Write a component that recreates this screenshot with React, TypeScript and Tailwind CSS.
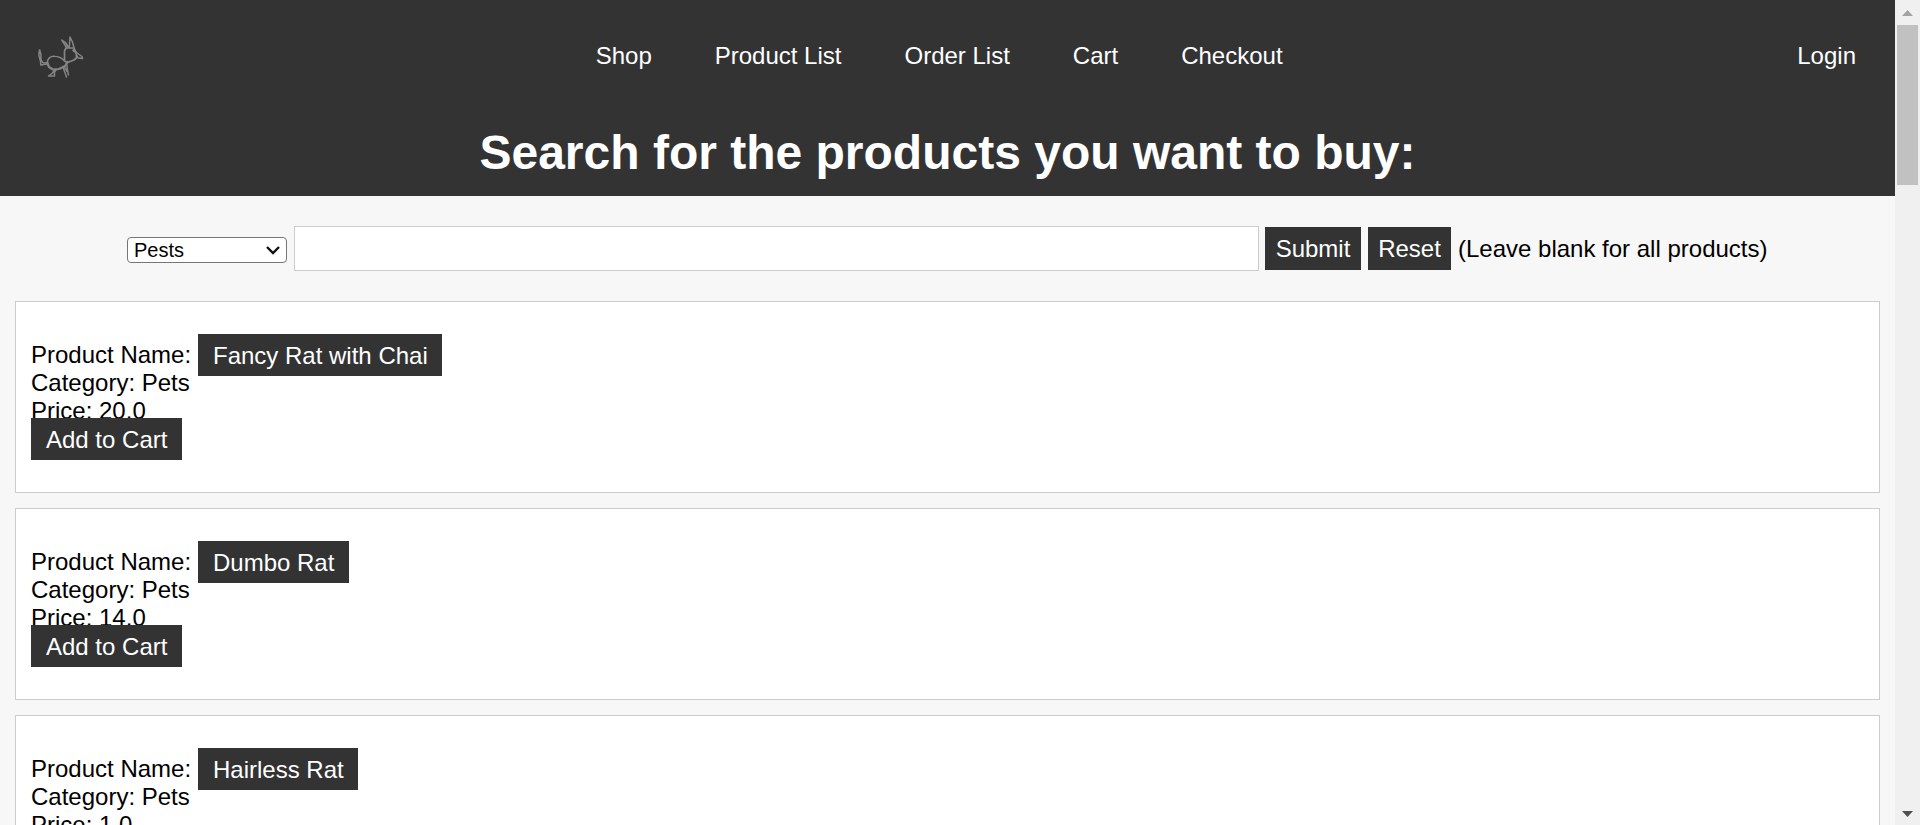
import React from "react";

const links = ["Shop", "Product List", "Order List", "Cart", "Checkout"];

const products = [
  { name: "Fancy Rat with Chai", category: "Pets", price: "20.0" },
  { name: "Dumbo Rat", category: "Pets", price: "14.0" },
  { name: "Hairless Rat", category: "Pets", price: "1.0" },
];

function Logo() {
  return (
    <svg className="ml-[37px] h-[44px] w-[48px] shrink-0" viewBox="37 35 48 44" fill="none" stroke="#858585" strokeWidth="1.5" strokeLinejoin="round" strokeLinecap="round">
      <path d="M39.5 50 38.8 55 40.5 61 40.8 65 46.5 64M39.7 50 41 55 40.8 59 42.6 62.5 47 63" />
      <path d="M47.5 65C46.5 58 51 56 55 56.3 59 56.5 61.5 58 64 60.5" />
      <path d="M47.5 63 49 67 53 69.5 59 69 65 66 67.5 62" strokeWidth="2.2" />
      <path d="M64.5 61V51L66 48H74L76 53 77 57M64.5 61 67.5 62.5 74 60 77.5 57" strokeWidth="1.7" />
      <path d="M66.5 47.5 61.8 40 65.5 42.5 68.3 47M69.3 47.5 70 37 72.5 42 74.3 49" />
      <path d="M74 49.5 77 53 82 56.5 82.5 58.5 78.5 58 76 56" strokeWidth="1.5" />
      <path d="M73.5 50.5 75 51.5" strokeWidth="2.4" />
      <path d="M54.5 70 52.5 73 48.5 76H54.5V72L56 70M63 67 66.5 77M64.5 67 67 71.5M67 65 67.2 69 68.5 75" />
    </svg>
  );
}

function ProductCard({ product }: { product: (typeof products)[number] }) {
  return (
    <article className="mx-[15px] mb-[15px] h-[192px] shrink-0 border border-[#ccc] bg-white px-[15px] pt-[39px] leading-[28px]">
      <div className="flex h-[28px]">
        <span className="w-[167px] shrink-0">Product Name:</span>
        <a className="-mt-[7px] h-[42px] bg-[#333] pl-[15px] pr-[14.3px] pt-[8px] text-white">{product.name}</a>
      </div>
      <div>Category: {product.category}</div>
      <div>Price: {product.price}</div>
      <a className="relative -mt-[7px] block h-[42px] w-[151px] bg-[#333] pl-[15px] pt-[8px] text-white">Add to Cart</a>
    </article>
  );
}

export default function App() {
  return (
    <div className="flex h-[825px] w-full overflow-hidden bg-[#f7f7f7] font-['Liberation_Sans',Arial,sans-serif] text-[24px] text-black">
      <main className="flex min-w-0 flex-1 flex-col overflow-hidden">
        <header className="h-[196px] shrink-0 bg-[#333] text-white">
          <div className="flex h-[113px] items-center justify-between">
            <Logo />
            <nav className="flex gap-[63px] whitespace-nowrap pb-[2px] pr-[4px]">
              {links.map((link) => (
                <a key={link}>{link}</a>
              ))}
            </nav>
            <a className="mr-[39px] pb-[2px]">Login</a>
          </div>
          <h1 className="mt-[11px] text-center text-[48px] font-bold leading-[58px]">Search for the products you want to buy:</h1>
        </header>
        <form className="flex h-[105px] shrink-0 items-start pl-[127px] pt-[30px] leading-[43px]">
          <div className="mt-[11px] flex h-[26px] w-[160px] shrink-0 items-center justify-between rounded-[4px] border border-[#767676] bg-white pl-[6px] pr-[6px] text-[20px] leading-[24px]">
            <span>Pests</span>
            <svg width="14" height="10" viewBox="0 0 14 10" fill="none" stroke="#111" strokeWidth="2.4">
              <path d="m1 2 6 6 6-6" />
            </svg>
          </div>
          <input className="ml-[7px] block h-[45px] w-[965px] shrink-0 border border-[#ccc] bg-white px-2 outline-none" />
          <button type="button" className="ml-[6px] mt-px h-[43px] w-[96px] shrink-0 bg-[#333] text-center text-white">Submit</button>
          <button type="button" className="ml-[7px] mt-px h-[43px] w-[83px] shrink-0 bg-[#333] text-center text-white">Reset</button>
          <span className="ml-[7px] mt-px whitespace-nowrap">(Leave blank for all products)</span>
        </form>
        {products.map((product) => (
          <ProductCard key={product.name} product={product} />
        ))}
      </main>
      <aside className="flex w-[25px] shrink-0 flex-col items-center bg-[#f0f0f0]">
        <svg width="25" height="25" viewBox="0 0 25 25" fill="#a3a3a3">
          <path d="M7 16 12.5 10 18 16Z" />
        </svg>
        <div className="h-[160px] w-[21px] bg-[#c1c1c1]" />
        <svg className="mt-auto" width="25" height="25" viewBox="0 0 25 25" fill="#505050">
          <path d="M7 11H18L12.5 17Z" />
        </svg>
      </aside>
    </div>
  );
}
